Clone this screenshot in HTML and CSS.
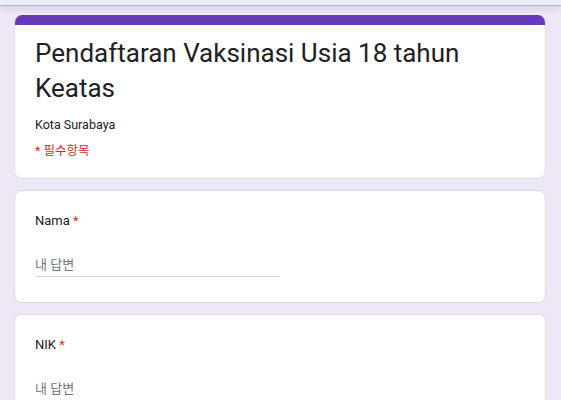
FILE: index.html
```html
<!DOCTYPE html>
<html lang="ko">
<head>
    <meta charset="UTF-8">
    <meta name="viewport" content="width=device-width, initial-scale=1.0">
    <title>Pendaftaran Vaksinasi Usia 18 tahun Keatas</title>
    <link rel="stylesheet" href="styles.css">
</head>
<body>

    <div class="topbar"></div>

    <div class="container">
        <!-- Form header -->
        <div class="card header-card">
            <div class="accent"></div>
            <div class="header-body">
                <h1>Pendaftaran Vaksinasi Usia 18 tahun Keatas</h1>
                <p class="description">Kota Surabaya</p>
                <p class="required-note">* 필수항목</p>
            </div>
        </div>

        <!-- Questions -->
        <div class="card question">
            <label for="nama">Nama <span class="star">*</span></label>
            <input type="text" id="nama" placeholder="내 답변">
        </div>

        <div class="card question">
            <label for="nik">NIK <span class="star">*</span></label>
            <input type="text" id="nik" placeholder="내 답변">
        </div>
    </div>

</body>
</html>
```

FILE: styles.css
```css
* {
    margin: 0;
    padding: 0;
    box-sizing: border-box;
}

body {
    font-family: 'Roboto', 'Noto Sans CJK KR', sans-serif;
    background-color: #ede7f6;
    color: #202124;
}

.topbar {
    height: 6px;
    background-color: #e6eefa;
    border-bottom: 1px solid #a9b9d2;
    box-shadow: 0 2px 6px rgba(60, 50, 90, 0.15);
}

.container {
    padding: 9px 15px 0 14px;
}

.card {
    background-color: white;
    border: 1px solid #dadce0;
    border-radius: 8px;
    margin-bottom: 11px;
}

.header-card {
    overflow: hidden;
    border-top: none;
}

.accent {
    height: 10px;
    background-color: #673ab7;
}

.header-body {
    padding: 11px 20px 18px;
}

h1 {
    font-size: 26px;
    font-weight: 400;
    line-height: 35px;
    color: #202124;
}

.description {
    font-size: 12.5px;
    line-height: 18px;
    margin-top: 10px;
}

.required-note {
    font-size: 12.5px;
    line-height: 18px;
    margin-top: 8px;
    color: #d93025;
}

.question {
    padding: 20px 20px 25px;
}

label {
    display: block;
    font-size: 13px;
    line-height: 20px;
    color: #202124;
}

.star {
    color: #d93025;
}

input {
    display: block;
    width: 50%;
    margin-top: 22px;
    padding: 4px 0 3px;
    border: none;
    border-bottom: 1px solid #dadce0;
    font-family: 'Roboto', 'Noto Sans CJK KR', sans-serif;
    font-size: 13px;
    line-height: 16px;
    color: #202124;
    outline: none;
}

input::placeholder {
    color: #70757a;
}
```
